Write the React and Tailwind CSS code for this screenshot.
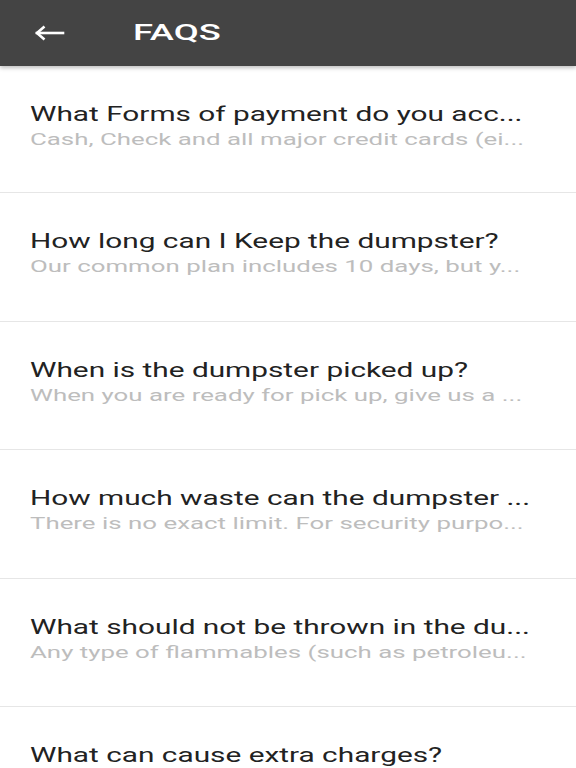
import React from "react";

const faqs = [
  ["What Forms of payment do you acc...", "Cash, Check and all major credit cards (ei..."],
  ["How long can I Keep the dumpster?", "Our common plan includes 10 days, but y..."],
  ["When is the dumpster picked up?", "When you are ready for pick up, give us a ..."],
  ["How much waste can the dumpster ...", "There is no exact limit. For security purpo..."],
  ["What should not be thrown in the du...", "Any type of flammables (such as petroleu..."],
  ["What can cause extra charges?", ""],
];

export default function App() {
  return (
    <div className="w-[576px] h-[768px] overflow-hidden bg-white" style={{ fontFamily: "Roboto, 'Noto Sans', sans-serif" }}>
      <div className="relative z-10 h-[66px] bg-[#444444] flex items-center shadow-[0_2px_4px_rgba(0,0,0,0.25)]">
        <svg className="ml-[35px]" width="30" height="16" viewBox="0 0 30 16" fill="none" stroke="white" strokeWidth="2.6" strokeLinecap="square">
          <path d="M2 8H28" />
          <path d="M9.5 1.5L2 8L9.5 14.5" strokeLinecap="butt" />
        </svg>
        <div className="ml-[68px] text-white font-medium text-[22px] leading-none origin-left scale-x-[1.65]">FAQS</div>
      </div>
      <div className="flex flex-col">
        {faqs.map(([q, a], i) => (
          <div
            key={i}
            className={`${i === 0 ? "h-[127px]" : "h-[128.5px]"} shrink-0 border-b-[1.5px] border-[#e6e6e6] pl-[30px] pt-[36px] flex flex-col`}
          >
            <div className="text-[20px] leading-[24px] text-[#222222] whitespace-nowrap origin-left scale-x-[1.49]">{q}</div>
            {a && (
              <div className="mt-[3px] text-[17px] leading-[20px] text-[#bdbdbd] whitespace-nowrap origin-left scale-x-[1.52]">{a}</div>
            )}
          </div>
        ))}
      </div>
    </div>
  );
}
